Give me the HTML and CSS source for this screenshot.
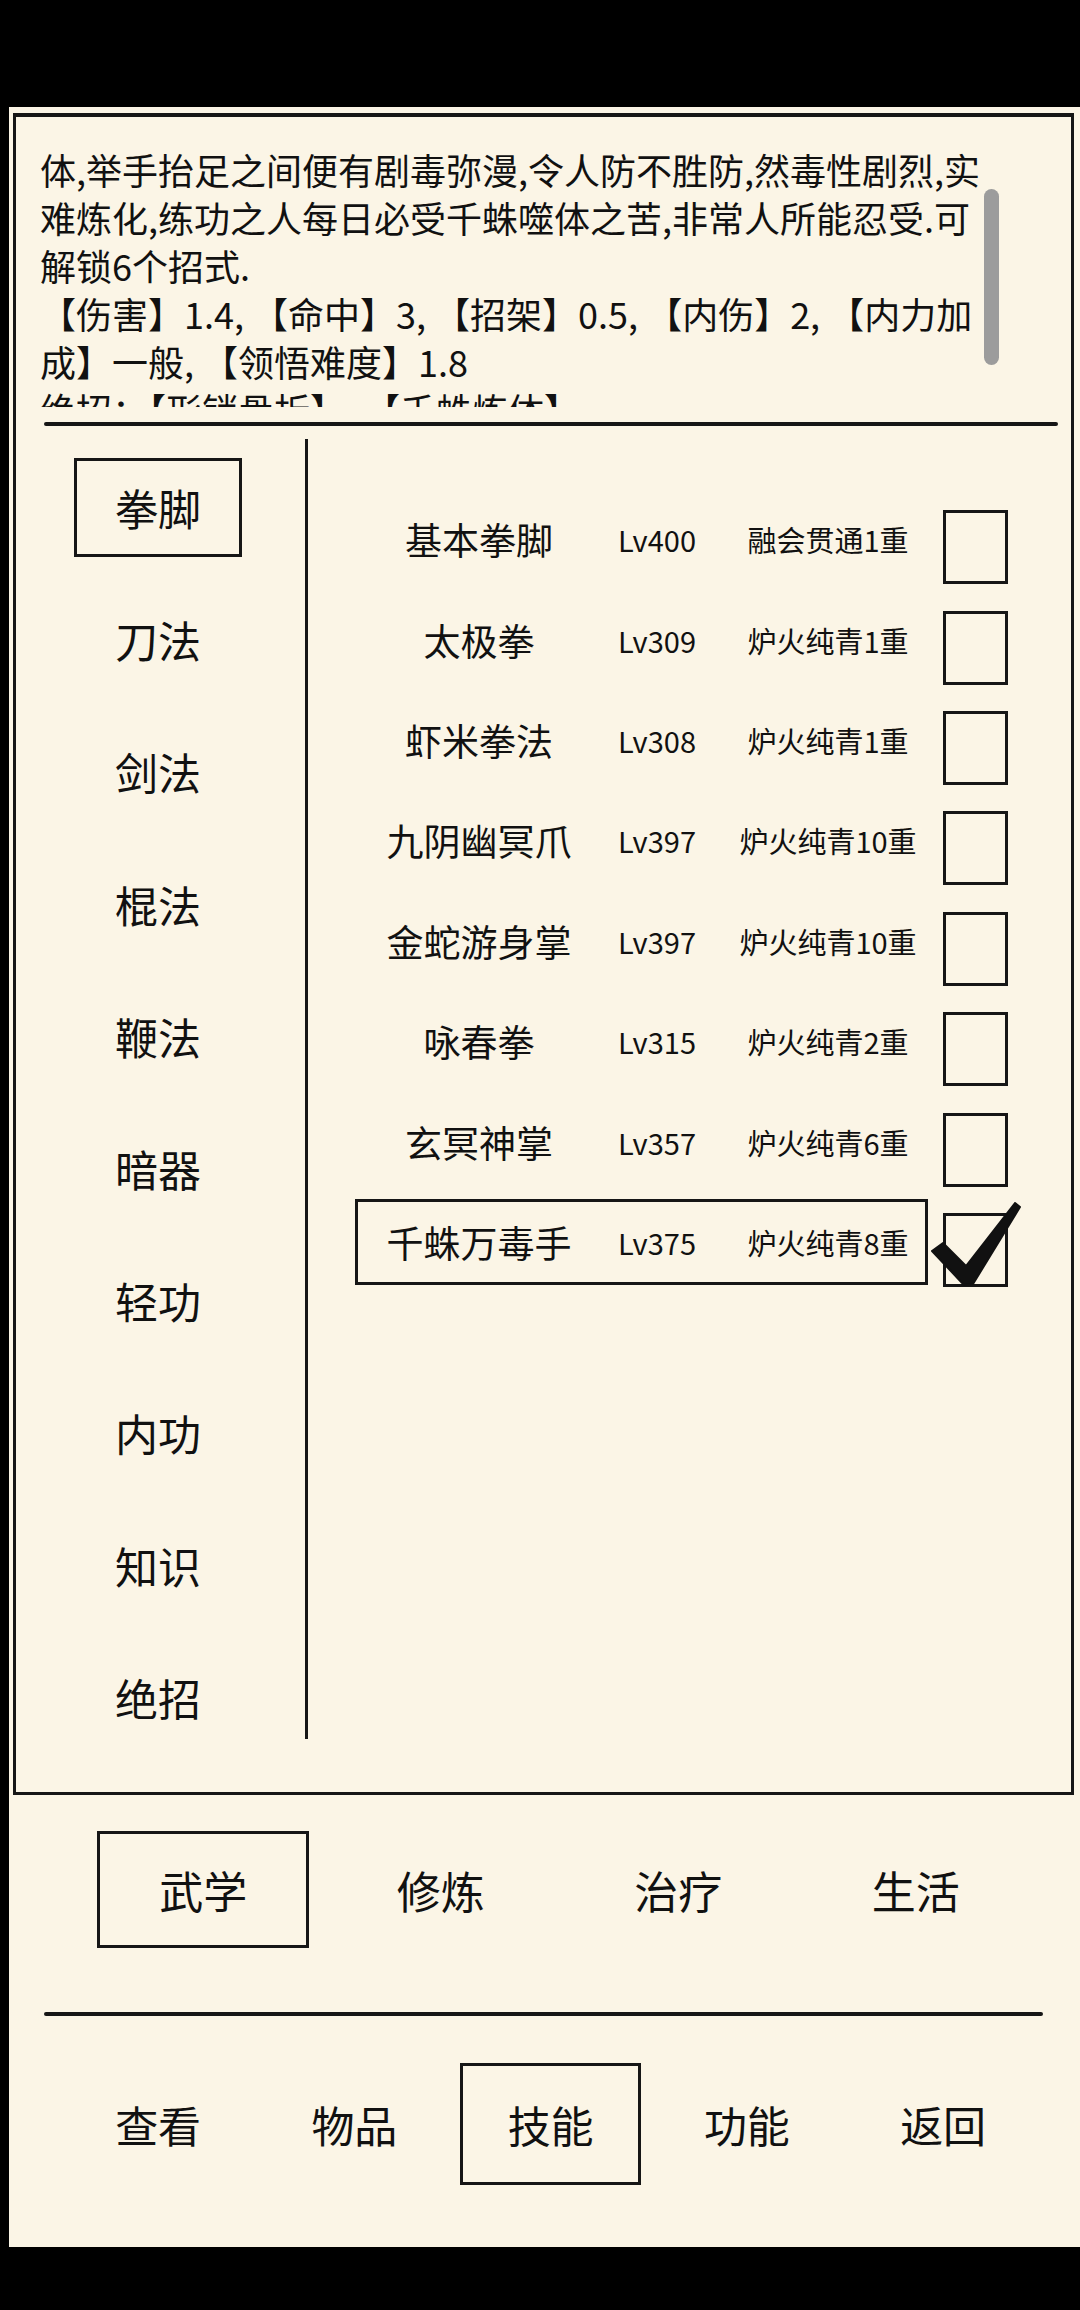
FILE: index.html
```html
<!DOCTYPE html>
<html lang="zh-CN">
<head>
  <meta charset="UTF-8" />
  <meta name="viewport" content="width=device-width, initial-scale=1.0" />
  <title>技能</title>
  <link rel="stylesheet" href="styles.css">
</head>
<body>
  <div class="screen">
    <div class="panel">
      <div class="desc">
        <p>体,举手抬足之间便有剧毒弥漫,令人防不胜防,然毒性剧烈,实</p>
        <p>难炼化,练功之人每日必受千蛛噬体之苦,非常人所能忍受.可</p>
        <p>解锁6个招式.</p>
        <p>【伤害】1.4, 【命中】3, 【招架】0.5, 【内伤】2, 【内力加</p>
        <p>成】一般, 【领悟难度】1.8</p>
        <p>绝招：【形销骨折】, 【千蛛炼体】</p>
        <div class="scrollbar"></div>
      </div>
      <div class="rule"></div>
      <div class="main">
        <ul class="cats">
          <li class="active"><span>拳脚</span></li>
          <li><span>刀法</span></li>
          <li><span>剑法</span></li>
          <li><span>棍法</span></li>
          <li><span>鞭法</span></li>
          <li><span>暗器</span></li>
          <li><span>轻功</span></li>
          <li><span>内功</span></li>
          <li><span>知识</span></li>
          <li><span>绝招</span></li>
        </ul>
        <div class="vline"></div>
        <div class="skills" id="skills"></div>
      </div>
    </div>

    <div class="tabs">
      <div class="tab active"><span>武学</span></div>
      <div class="tab"><span>修炼</span></div>
      <div class="tab"><span>治疗</span></div>
      <div class="tab"><span>生活</span></div>
    </div>
    <div class="rule rule-bottom"></div>
    <div class="nav">
      <div class="nav-item"><span>查看</span></div>
      <div class="nav-item"><span>物品</span></div>
      <div class="nav-item active"><span>技能</span></div>
      <div class="nav-item"><span>功能</span></div>
      <div class="nav-item"><span>返回</span></div>
    </div>
  </div>

  <script>
    const skills = [
      ['基本拳脚', 'Lv400', '融会贯通1重'],
      ['太极拳', 'Lv309', '炉火纯青1重'],
      ['虾米拳法', 'Lv308', '炉火纯青1重'],
      ['九阴幽冥爪', 'Lv397', '炉火纯青10重'],
      ['金蛇游身掌', 'Lv397', '炉火纯青10重'],
      ['咏春拳', 'Lv315', '炉火纯青2重'],
      ['玄冥神掌', 'Lv357', '炉火纯青6重'],
      ['千蛛万毒手', 'Lv375', '炉火纯青8重']
    ];
    const equipped = 7;
    const lista = document.getElementById('skills');

    skills.forEach((s, i) => {
      const row = document.createElement('div');
      row.className = 'row';

      const info = document.createElement('div');
      info.className = 'skill';
      if (i === equipped) info.classList.add('selected');
      ['name', 'lv', 'level'].forEach((cls, j) => {
        const cell = document.createElement('span');
        cell.className = cls;
        cell.textContent = s[j];
        info.appendChild(cell);
      });

      const box = document.createElement('div');
      box.className = 'check';
      if (i === equipped) {
        box.innerHTML = '<svg class="tick" viewBox="0 0 92 86" width="92" height="86">' +
          '<path d="M2 49 L13 41 L36 64 L85 1 L90 5 L43 82 L34 83 Z" fill="#111" stroke="#111" stroke-width="2" stroke-linejoin="round"/></svg>';
      }

      row.appendChild(info);
      row.appendChild(box);
      lista.appendChild(row);
    });
  </script>
</body>
</html>
```

FILE: styles.css
```css
* {
  box-sizing: border-box;
}
html, body {
  background-color: #000;
}
body {
  margin: 0;
  font-family: "Noto Sans CJK SC", "Noto Sans", sans-serif;
  color: #111;
}
.screen {
  margin: 107px 0 0 9px;
  width: 1071px;
  height: 2140px;
  padding-top: 6px;
  background-color: #fbf5e6;
}
.panel {
  margin-left: 4px;
  width: 1061px;
  height: 1682px;
  border: 3px solid #161616;
  border-top-width: 4px;
}

/* descricao */
.desc {
  position: relative;
  height: 290px;
  padding: 28px 0 0 24px;
  overflow: hidden;
  font-size: 36px;
  line-height: 48px;
}
.desc p {
  margin: 0;
  white-space: nowrap;
}
.scrollbar {
  position: absolute;
  left: 968px;
  top: 72px;
  width: 15px;
  height: 176px;
  border-radius: 8px;
  background-color: #9c9c9c;
}
.rule {
  margin: 15px 0 0 28px;
  width: 1014px;
  height: 4px;
  border-radius: 2px;
  background-color: #161616;
}

.main {
  display: flex;
  height: 1366px;
}
.cats {
  list-style: none;
  margin: 0;
  padding: 15px 0 0 58px;
  width: 289px;
}
.cats li {
  height: 132.2px;
  display: flex;
  align-items: center;
}
.cats span {
  width: 168px;
  height: 99px;
  display: flex;
  align-items: center;
  justify-content: center;
  font-size: 43px;
  border: 3px solid transparent;
}
.cats li.active span {
  border-color: #161616;
}
.vline {
  width: 3px;
  margin-top: 13px;
  height: 1300px;
  background-color: #161616;
}

/* lista de tecnicas */
.skills {
  padding: 63px 0 0 47px;
}
.row {
  height: 100.4px;
  display: flex;
  align-items: center;
}
.skill {
  width: 573px;
  height: 86px;
  display: grid;
  grid-template-columns: 242px 114px 1fr;
  align-items: center;
  text-align: center;
  border: 3px solid transparent;
}
.skill.selected {
  border-color: #161616;
}
.skill .name {
  font-size: 37px;
}
.skill .lv {
  font-size: 29px;
}
.skill .level {
  font-size: 29px;
  padding-left: 17px;
}
.check {
  position: relative;
  margin: 16px 0 0 15px;
  width: 65px;
  height: 74px;
  border: 3px solid #161616;
}
.tick {
  position: absolute;
  left: -16px;
  top: -14px;
}

/* abas inferiores */
.tabs {
  display: grid;
  grid-template-columns: repeat(4, 237.5px);
  margin: 36px 0 0 75.5px;
  height: 117px;
}
.tab {
  display: flex;
  justify-content: center;
}
.tab span, .nav-item span {
  display: flex;
  align-items: center;
  justify-content: center;
  border: 3px solid transparent;
}
.tab span {
  width: 212px;
  height: 117px;
  font-size: 44px;
}
.tab.active span, .nav-item.active span {
  border-color: #161616;
}
.rule-bottom {
  margin: 64px 0 0 35px;
  width: 999px;
}
.nav {
  display: grid;
  grid-template-columns: repeat(5, 196.25px);
  margin: 47px 0 0 51px;
  height: 122px;
}
.nav-item {
  display: flex;
  justify-content: center;
}
.nav-item span {
  width: 181px;
  height: 122px;
  font-size: 43px;
}
```
